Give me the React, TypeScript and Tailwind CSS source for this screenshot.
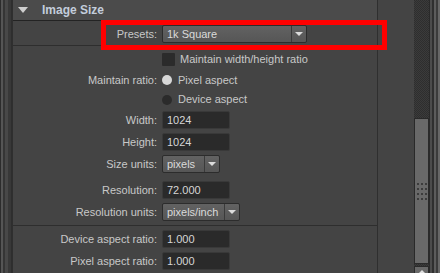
import React from 'react';

const font = "font-['Liberation_Sans',Arial,sans-serif]";

function Field({ value }: { value: string }) {
  return (
    <div className="w-[68px] h-[18px] rounded-[2px] bg-[#2a2a2a] border border-[#393939] pl-[4px] flex items-center text-[#d6d6d6]">
      {value}
    </div>
  );
}

function Dropdown({ value, width }: { value: string; width: string }) {
  return (
    <div
      className={`${width} h-[18px] flex rounded-[2px] border border-[#2c2c2c] bg-gradient-to-b from-[#626262] to-[#565656] text-[#dadada]`}
    >
      <div className="flex-1 pl-[4px] flex items-center">{value}</div>
      <div className="w-[15px] border-l border-[#3a3a3a] flex items-center justify-center">
        <div className="w-0 h-0 border-l-[4px] border-r-[4px] border-t-[4px] border-l-transparent border-r-transparent border-t-[#dcdcdc]" />
      </div>
    </div>
  );
}

function Row({
  label,
  height,
  children,
}: {
  label?: string;
  height: string;
  children: React.ReactNode;
}) {
  return (
    <div className={`flex items-center ${height}`}>
      <div className="w-[149px] pr-[5px] text-right text-[#c8c8c8]">{label}</div>
      {children}
    </div>
  );
}

export default function App() {
  return (
    <div className={`relative w-[440px] h-[273px] overflow-hidden bg-[#444444] flex text-[11px] ${font}`}>
      {/* left edge stripes */}
      <div className="w-[12px] h-full flex">
        <div className="w-[1px] bg-[#2c2c2c]" />
        <div className="w-[2px] bg-[#555555]" />
        <div className="w-[2px] bg-[#353535]" />
        <div className="w-[3px] bg-[#484848]" />
        <div className="w-[3px] bg-[#383838]" />
        <div className="w-[1px] bg-[#2e2e2e]" />
      </div>

      {/* main attribute column */}
      <div className="w-[365px] h-full flex flex-col border-l border-[#2f2f2f]">
        {/* section header */}
        <div className="h-[21px] shrink-0 bg-[#4b4b4b] border-b border-[#232323] flex items-center">
          <div className="ml-[5px] w-0 h-0 border-l-[5px] border-r-[5px] border-t-[6px] border-l-transparent border-r-transparent border-t-[#cfcfcf]" />
          <span className="ml-[14px] font-bold text-[12px] text-[#c3cddb]">Image Size</span>
        </div>

        <div className="h-[25px] shrink-0 pt-[4px] border-b border-[#2e2e2e]">
          <Row label="Presets:" height="h-[18px]">
            <Dropdown value="1k Square" width="w-[145px]" />
          </Row>
        </div>

        <div className="shrink-0 pt-[2px] h-[180px] border-b border-[#2e2e2e]">
          <Row height="h-[22px]">
            <div className="w-[13px] h-[13px] rounded-[1px] bg-[#2b2b2b]" />
            <span className="ml-[5px] text-[#c8c8c8]">Maintain width/height ratio</span>
          </Row>
          <Row label="Maintain ratio:" height="h-[20px]">
            <div className="w-[10px] h-[10px] rounded-full bg-[#d8d8d8]" />
            <span className="ml-[6px] text-[#c8c8c8]">Pixel aspect</span>
          </Row>
          <Row height="h-[19px]">
            <div className="w-[10px] h-[10px] rounded-full bg-[#2b2b2b]" />
            <span className="ml-[6px] text-[#c8c8c8]">Device aspect</span>
          </Row>
          <Row label="Width:" height="h-[22px]">
            <Field value="1024" />
          </Row>
          <Row label="Height:" height="h-[22px]">
            <Field value="1024" />
          </Row>
          <Row label="Size units:" height="h-[22px]">
            <Dropdown value="pixels" width="w-[58px]" />
          </Row>
          <div className="h-[4px]" />
          <Row label="Resolution:" height="h-[22px]">
            <Field value="72.000" />
          </Row>
          <Row label="Resolution units:" height="h-[22px]">
            <Dropdown value="pixels/inch" width="w-[78px]" />
          </Row>
        </div>

        <div className="pt-[2px]">
          <Row label="Device aspect ratio:" height="h-[22px]">
            <Field value="1.000" />
          </Row>
          <Row label="Pixel aspect ratio:" height="h-[22px]">
            <Field value="1.000" />
          </Row>
        </div>
      </div>

      {/* empty panel strip */}
      <div className="w-[37px] h-full border-l border-[#2f2f2f]" />

      {/* scrollbar */}
      <div className="w-[15px] h-full flex flex-col bg-[repeating-conic-gradient(#3b3b3b_0_25%,#2e2e2e_0_50%)] bg-[length:2px_2px]">
        <div className="h-[118px] shrink-0" />
        <div className="h-[146px] shrink-0 bg-[#696969] border border-[#2a2a2a] flex flex-col items-center">
          <div className="mt-[64px] grid grid-cols-3 gap-x-[2px] gap-y-[3px]">
            {Array.from({ length: 12 }).map((_, i) => (
              <div key={i} className="w-[2px] h-[2px] bg-[#3c3c3c]" />
            ))}
          </div>
        </div>
        <div className="h-[2px] shrink-0" />
        <div className="flex-1 bg-[#696969] border border-[#2a2a2a] flex justify-center pt-[3px]">
          <div className="w-0 h-0 border-l-[4px] border-r-[4px] border-b-[4px] border-l-transparent border-r-transparent border-b-[#e0e0e0]" />
        </div>
      </div>

      {/* right edge stripes */}
      <div className="w-[11px] h-full flex">
        <div className="w-[1px] bg-[#2a2a2a]" />
        <div className="w-[2px] bg-[#4c4c4c]" />
        <div className="w-[2px] bg-[#2f2f2f]" />
        <div className="w-[2px] bg-[#5c5c5c]" />
        <div className="w-[2px] bg-[#3b3b3b]" />
        <div className="w-[2px] bg-[#676767]" />
      </div>

      {/* red highlight annotation */}
      <div className="absolute left-[101px] top-[20px] w-[286px] h-[30px] border-[5px] border-[#ff0000]" />
    </div>
  );
}
